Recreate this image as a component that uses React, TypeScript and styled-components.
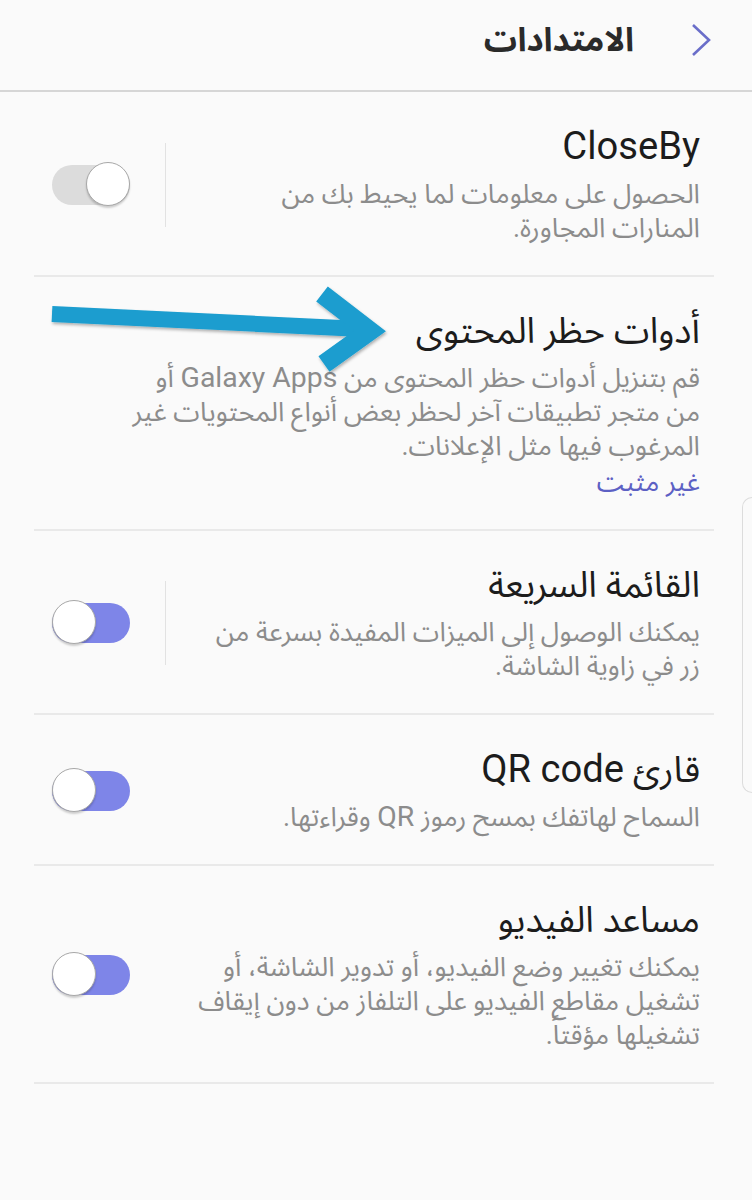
import styled, { createGlobalStyle } from 'styled-components'

const GlobalStyle = createGlobalStyle`
  body {
    margin: 0;
    background: #fafafa;
    font-family: "Roboto", "Noto Sans Arabic", "Noto Sans Arabic UI", "Noto Sans", "DejaVu Sans", sans-serif;
  }
`

const Page = styled.div`
  position: relative;
  direction: rtl;
  min-height: 1200px;
  background: #fafafa;
  overflow: hidden;
`

const Header = styled.header`
  display: flex;
  align-items: center;
  gap: 56px;
  height: 92px;
  padding: 0 40px 10px 0;
  border-bottom: 2px solid #d6d6d6;
  box-sizing: border-box;
`

const HeaderTitle = styled.h1`
  margin: 0;
  font-size: 33px;
  font-weight: 700;
  color: #2a2a2a;
`

const List = styled.div`
  margin: 0 38px 0 34px;
`

const Row = styled.div`
  display: flex;
  align-items: center;
  padding: 32px 14px 30px 18px;
  border-bottom: 2px solid #e9e9e9;
`

const TextBlock = styled.div`
  flex: 1;
`

const Title = styled.div`
  font-size: 36px;
  line-height: 44px;
  color: #1c1c1c;
  margin-bottom: 8px;
`

const Latin = styled.span`
  font-size: 1.06em;
`

const Desc = styled.div`
  font-size: 26.8px;
  line-height: 34px;
  color: #8c8c8c;
`

const Status = styled.div`
  font-size: 26.8px;
  line-height: 34px;
  color: #5c60c4;
  margin-top: 2px;
`

const Side = styled.div`
  display: flex;
  align-items: center;
  gap: 35px;
  flex-shrink: 0;
`

const Separator = styled.div<{ $hidden?: boolean }>`
  width: 1px;
  height: 84px;
  background: ${(p) => (p.$hidden ? 'transparent' : '#e2e2e2')};
`

const Track = styled.div<{ $on: boolean }>`
  position: relative;
  width: 78px;
  height: 40px;
  border-radius: 20px;
  background: ${(p) => (p.$on ? '#7e85e8' : '#dcdcdc')};
`

const Thumb = styled.div<{ $on: boolean }>`
  position: absolute;
  top: -3px;
  ${(p) => (p.$on ? 'left: 0;' : 'right: 0;')}
  width: 44px;
  height: 44px;
  border-radius: 50%;
  background: #ffffff;
  border: 1.5px solid #a8a8a8;
  box-sizing: border-box;
  box-shadow: 0 2px 2px rgba(0, 0, 0, 0.18);
`

const ScrollHint = styled.div`
  position: absolute;
  right: 0;
  top: 497px;
  width: 9px;
  height: 294px;
  border: 1.5px solid #dcdcdc;
  border-right: none;
  border-radius: 10px 0 0 10px;
`

const ArrowMark = styled.svg`
  position: absolute;
  left: 40px;
  top: 280px;
  width: 360px;
  height: 95px;
  overflow: visible;
`

const Toggle = ({ on }: { on: boolean }) => (
  <Track $on={on}>
    <Thumb $on={on} />
  </Track>
)

const Chevron = () => (
  <svg width="22" height="34" viewBox="0 0 22 34">
    <path d="M3 2 L19 17 L3 32" fill="none" stroke="#6a6ec9" strokeWidth="2.6" />
  </svg>
)

const App = () => {
  return (
    <Page>
      <GlobalStyle />
      <Header>
        <Chevron />
        <HeaderTitle>الامتدادات</HeaderTitle>
      </Header>
      <List>
        <Row>
          <TextBlock>
            <Title><Latin>CloseBy</Latin></Title>
            <Desc>
              الحصول على معلومات لما يحيط بك من
              <br />
              المنارات المجاورة.
            </Desc>
          </TextBlock>
          <Side>
            <Separator />
            <Toggle on={false} />
          </Side>
        </Row>
        <Row>
          <TextBlock>
            <Title>أدوات حظر المحتوى</Title>
            <Desc>
              قم بتنزيل أدوات حظر المحتوى من <Latin>Galaxy Apps</Latin> أو
              <br />
              من متجر تطبيقات آخر لحظر بعض أنواع المحتويات غير
              <br />
              المرغوب فيها مثل الإعلانات.
            </Desc>
            <Status>غير مثبت</Status>
          </TextBlock>
        </Row>
        <Row>
          <TextBlock>
            <Title>القائمة السريعة</Title>
            <Desc>
              يمكنك الوصول إلى الميزات المفيدة بسرعة من
              <br />
              زر في زاوية الشاشة.
            </Desc>
          </TextBlock>
          <Side>
            <Separator />
            <Toggle on={true} />
          </Side>
        </Row>
        <Row>
          <TextBlock>
            <Title>قارئ <Latin>QR code</Latin></Title>
            <Desc>السماح لهاتفك بمسح رموز <Latin>QR</Latin> وقراءتها.</Desc>
          </TextBlock>
          <Side>
            <Separator $hidden />
            <Toggle on={true} />
          </Side>
        </Row>
        <Row>
          <TextBlock>
            <Title>مساعد الفيديو</Title>
            <Desc>
              يمكنك تغيير وضع الفيديو، أو تدوير الشاشة، أو
              <br />
              تشغيل مقاطع الفيديو على التلفاز من دون إيقاف
              <br />
              تشغيلها مؤقتاً.
            </Desc>
          </TextBlock>
          <Side>
            <Separator $hidden />
            <Toggle on={true} />
          </Side>
        </Row>
      </List>
      <ScrollHint />
      <ArrowMark viewBox="0 0 360 95">
        <defs>
          <filter id="arrowShadow" x="-10%" y="-30%" width="120%" height="160%">
            <feDropShadow dx="1" dy="2" stdDeviation="1.5" floodColor="#000" floodOpacity="0.3" />
          </filter>
        </defs>
        <g filter="url(#arrowShadow)" fill="none" stroke="#1b9dcf">
          <path d="M12 34 L322 49" strokeWidth="16" />
          <path d="M282 14 L330 51 L284 84" strokeWidth="19" strokeLinejoin="miter" />
        </g>
      </ArrowMark>
    </Page>
  )
}

export default App
